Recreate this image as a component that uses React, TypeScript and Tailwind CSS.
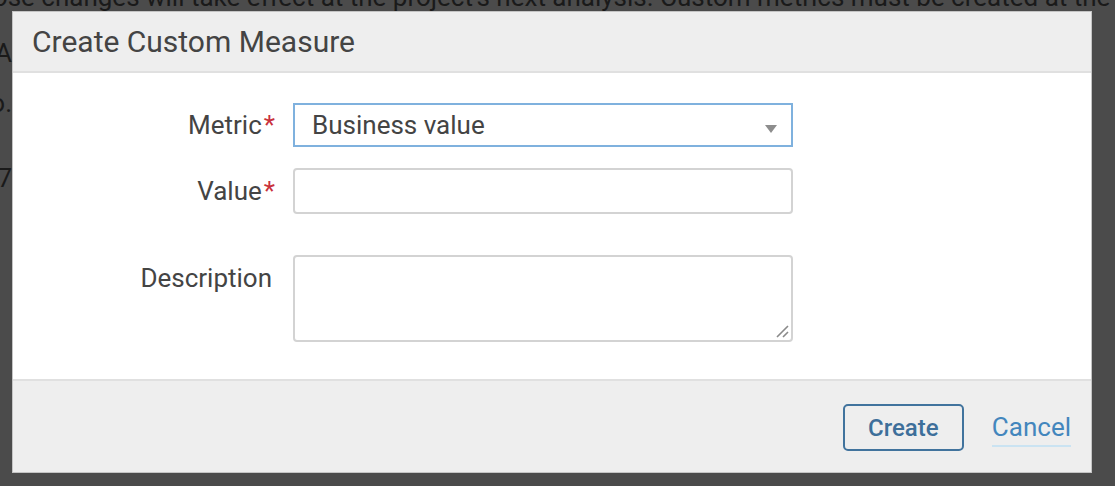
import { ChangeEvent, useState } from 'react';

function Required() {
  return <span className="ml-[2px] text-[#c9313c]">*</span>;
}

export default function App() {
  const [value, setValue] = useState('');
  const [description, setDescription] = useState('');

  return (
    <div className="relative h-[486px] w-full overflow-hidden bg-[#4b4b4b] font-['Roboto',sans-serif]">
      {/* page behind the overlay */}
      <div className="flex flex-col text-[26px] leading-[30px] text-[#1a1a1a]">
        <div className="h-[11px] overflow-hidden whitespace-nowrap">
          <div className="-ml-[30px] -mt-[18px]">
            those changes will take effect at the project's next analysis. Custom metrics must be created at the global level.
          </div>
        </div>
        <div className="mt-[27px] flex w-[12px] justify-end overflow-hidden whitespace-nowrap">
          <span>7A</span>
        </div>
        <div className="mt-[20px] flex w-[12px] justify-end overflow-hidden whitespace-nowrap">
          <span>to.</span>
        </div>
        <div className="mt-[45px] flex w-[12px] justify-end overflow-hidden whitespace-nowrap">
          <span>77</span>
        </div>
      </div>

      {/* modal */}
      <div className="absolute left-[12px] top-[11px] flex w-[1080px] flex-col border border-[#c4c4c4] bg-white">
        <div className="flex h-[61px] items-center border-b-2 border-[#e0e0e0] bg-[#eeeeee] pl-[19px]">
          <h2 className="text-[30px] font-normal text-[#444]">Create Custom Measure</h2>
        </div>

        <div className="grid grid-cols-[262px_500px] gap-x-[18px] pb-[37px] pt-[30px] text-[26px] leading-[30px] text-[#444]">
          <label className="flex items-center justify-end">
            Metric
            <Required />
          </label>
          <div className="relative flex h-[44px] items-center border-2 border-[#7fb1de] bg-white pl-[17px]">
            Business value
            <svg className="absolute right-[14px] top-[20px]" width="12" height="8" viewBox="0 0 12 8">
              <path d="M0 0 L12 0 L6 8 Z" fill="#8d8d8d" />
            </svg>
          </div>

          <label className="mt-[21px] flex items-center justify-end">
            Value
            <Required />
          </label>
          <input
            value={value}
            onChange={(e: ChangeEvent<HTMLInputElement>) => setValue(e.target.value)}
            className="mt-[21px] h-[46px] rounded-[4px] border-2 border-[#d3d3d3] bg-white px-[14px] outline-none"
          />

          <label className="mt-[49px] flex items-start justify-end pr-[3px]">Description</label>
          <div className="relative mt-[41px] h-[87px]">
            <textarea
              value={description}
              onChange={(e: ChangeEvent<HTMLTextAreaElement>) => setDescription(e.target.value)}
              className="h-full w-full resize-none rounded-[4px] border-2 border-[#d3d3d3] bg-white px-[14px] outline-none"
            />
            <svg className="absolute bottom-[4px] right-[4px]" width="14" height="14" viewBox="0 0 14 14">
              <path d="M13 2 L2 13 M13 8 L8 13" stroke="#8a8a8a" strokeWidth="1.6" />
            </svg>
          </div>
        </div>

        <div className="flex h-[93px] items-center justify-end gap-[28px] border-t-2 border-[#e0e0e0] bg-[#eeeeee] pr-[20px]">
          <button className="mt-[2px] h-[47px] w-[121px] rounded-[5px] border-2 border-[#41739d] bg-transparent text-[24px] font-medium text-[#3d6f9a]">
            Create
          </button>
          <a href="#" className="border-b-2 border-[#cae3f2] pb-[3px] pt-[6px] text-[26px] leading-[30px] text-[#4386bd]">
            Cancel
          </a>
        </div>
      </div>
    </div>
  );
}
